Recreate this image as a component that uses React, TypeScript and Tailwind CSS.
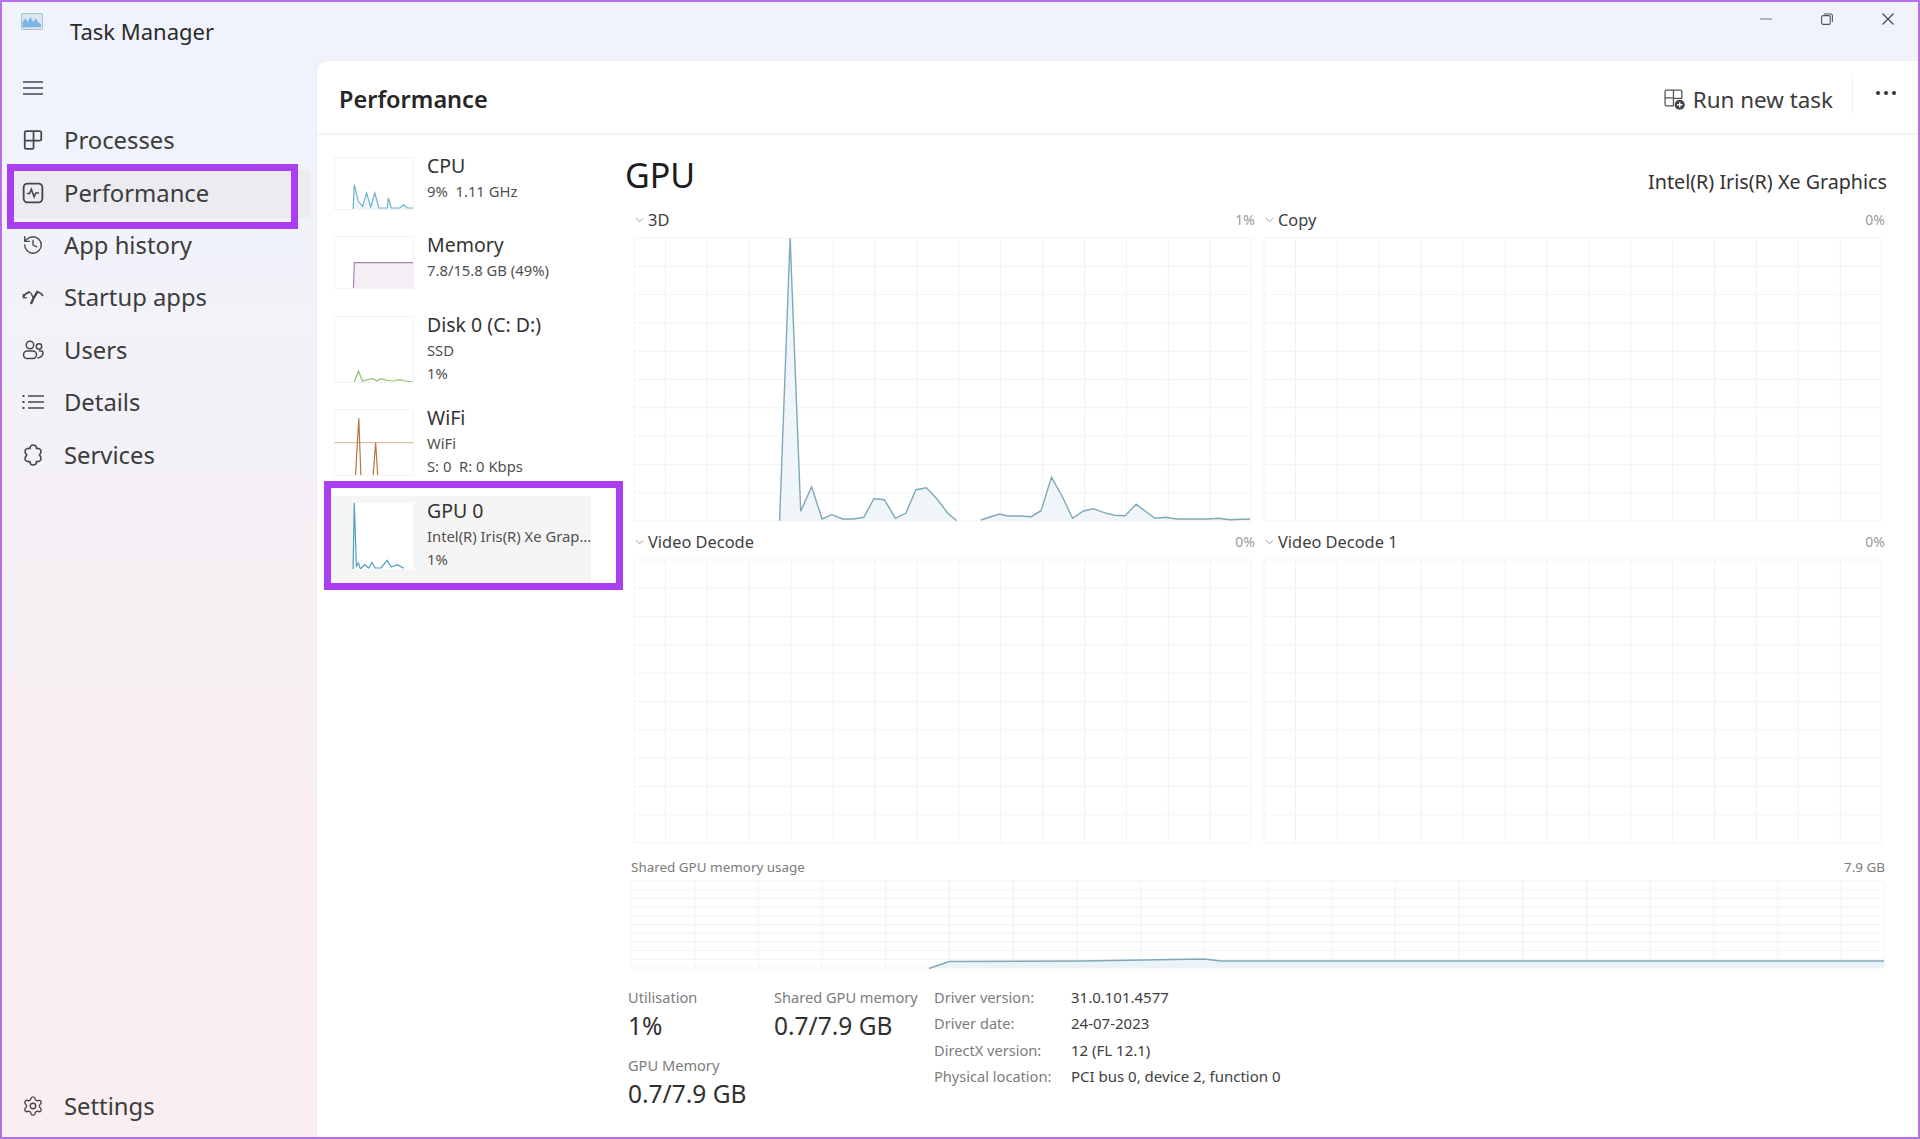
import React from "react";
import { History, Settings } from "lucide-react";

type Line = { vb: string; pts: string; stroke: string; fill?: string; sw?: number };

function Chart({ vb, pts, stroke, fill, sw = 1.2 }: Line) {
  const p = pts.trim().split(" ");
  const base = vb.split(" ").map(Number);
  const bottom = base[1] + base[3];
  const first = p[0].split(",")[0];
  const last = p[p.length - 1].split(",")[0];
  return (
    <>
      {fill && <polygon points={`${first},${bottom} ${pts} ${last},${bottom}`} fill={fill} stroke="none" />}
      <polyline points={pts} fill="none" stroke={stroke} strokeWidth={sw} vectorEffect="non-scaling-stroke" />
    </>
  );
}

function Thumb({ vb, h, lines, bare, children }: { vb: string; h: string; lines: Line[]; bare?: boolean; children?: React.ReactNode }) {
  return (
    <div className={`${h} w-[78px] shrink-0 ${bare ? "" : "bg-white shadow-[0_0_0_1px_#f3f3f3]"}`}>
      <svg viewBox={vb} preserveAspectRatio="none" className="block h-full w-full">
        {children}
        {lines.map((l, i) => (
          <Chart key={i} {...l} />
        ))}
      </svg>
    </div>
  );
}

function Item({ name, subs, selected, thumb, h }: { name: string; subs: string[]; selected?: boolean; thumb: React.ReactNode; h: string }) {
  return (
    <div className={`flex gap-[14px] pl-[8px] pt-[7px] ${h} ${selected ? "bg-[#f5f5f5]" : ""}`}>
      {thumb}
      <div className="-mt-[7px] flex min-w-0 flex-col pt-[1px]">
        <div className="h-[28px] text-[19.5px] leading-[28px] text-[#333]">{name}</div>
        {subs.map((s) => (
          <div key={s} className="h-[22.5px] whitespace-pre text-[14.8px] leading-[22.5px] text-[#505050]">
            {s}
          </div>
        ))}
      </div>
    </div>
  );
}

const W = 617;
const H = 283;

function Grid({ vFirst, vStep, rows, w, h, children }: { vFirst: number; vStep: number; rows: number; w: number; h: number; children?: React.ReactNode }) {
  const vs: number[] = [];
  for (let x = vFirst; x < w; x += vStep) vs.push(x);
  const hs: number[] = [];
  for (let i = 0; i <= rows; i++) hs.push((h * i) / rows);
  return (
    <svg viewBox={`0 0 ${w} ${h}`} className="block h-full w-full overflow-visible">
      {vs.map((x) => (
        <line key={x} x1={x} x2={x} y1={0} y2={h} stroke="#eff1f3" strokeWidth={1} />
      ))}
      {hs.map((y) => (
        <line key={y} x1={0} x2={w} y1={y} y2={y} stroke="#f1f3f4" strokeWidth={1} />
      ))}
      <line x1={0} x2={0} y1={0} y2={h} stroke="#f3f4f5" strokeWidth={1} />
      <line x1={w} x2={w} y1={0} y2={h} stroke="#f3f4f5" strokeWidth={1} />
      {children}
    </svg>
  );
}

const seg1 =
  "382,900 407,52 432,872 458,798 483,895 506,882 532,895 557,895 582,890 606,834 631,837 657,893 682,877 706,807 731,801 756,835 781,877 803,900";
const seg2 =
  "860,898 904,880 925,886 955,886 980,888 1003,870 1028,770 1053,826 1078,893 1104,871 1127,864 1153,876 1178,884 1203,885 1229,851 1274,893 1300,890 1325,895 1400,895 1425,893 1450,897 1500,895";

function toLocal(s: string) {
  return s
    .split(" ")
    .map((p) => {
      const [x, y] = p.split(",").map(Number);
      return `${((x - 36) / 2.376).toFixed(1)},${((y - 52) / 3).toFixed(1)}`;
    })
    .join(" ");
}

function GraphCell({ label, pct, chart }: { label: string; pct: string; chart?: React.ReactNode }) {
  return (
    <div className="flex flex-col">
      <div className="flex h-[35px] items-start justify-between pt-[6px]">
        <div className="flex items-center text-[16.4px] leading-[22px] text-[#404040]">
          <svg viewBox="0 0 10 6" className="ml-[1px] mr-[4px] h-[6px] w-[9px]" fill="none" stroke="#909090" strokeWidth="1">
            <path d="M1 1l4 4 4-4" />
          </svg>
          {label}
        </div>
        <div className="text-[14px] leading-[22px] text-[#9a9a9a]">{pct}</div>
      </div>
      <div className="mr-[4px] h-[283px]">
        <Grid vFirst={31.5} vStep={41.9} rows={10} w={W} h={H}>
          {chart}
        </Grid>
      </div>
    </div>
  );
}

function StatLabel({ children }: { children: React.ReactNode }) {
  return <div className="h-[24px] whitespace-nowrap text-[14.6px] leading-[24px] text-[#7c7c7c]">{children}</div>;
}
function StatValue({ children }: { children: React.ReactNode }) {
  return <div className="h-[34px] whitespace-nowrap text-[24.5px] leading-[34px] text-[#303030]">{children}</div>;
}

function NavRow({ icon, label, selected }: { icon: React.ReactNode; label: string; selected?: boolean }) {
  return (
    <div className="flex h-[52.4px] items-center">
      <div className={`ml-[6px] flex h-[48px] w-[302px] items-center rounded-[5px] ${selected ? "bg-[#ebebf0]" : ""}`}>
        <div className="ml-[14px] flex h-[22px] w-[22px] -translate-y-[1px] items-center justify-center text-[#484848]">{icon}</div>
        <span className="ml-[20px] text-[23.8px] leading-none text-[#3c3c3c]">{label}</span>
      </div>
    </div>
  );
}

const ic = "h-[22px] w-[22px]";

export default function App() {
  const sharedPts = "298,87.5 318,80.5 450,80 573,78 590,80 1253,80";
  return (
    <div
      className="relative flex h-[1139px] w-[1920px] flex-col overflow-hidden border-2 border-[#b66fe8] bg-gradient-to-b from-[#f0f3fb] from-15% to-[#f9eff1] to-70%"
      style={{ fontFamily: '"Noto Sans", "Open Sans", sans-serif' }}
    >
      {/* title bar */}
      <div className="flex h-[59px] shrink-0 items-start">
        <svg viewBox="0 0 22 17" className="ml-[19px] mt-[11px] h-[17px] w-[22px]">
          <rect x="0.5" y="0.5" width="21" height="16" rx="1" fill="#dbe8f3" stroke="#a9bfd2" />
          <path d="M1.500 14.500V9l3-4 2 4 3-5 2.500 5 3-3.500 2 3.500 3 2v3z" fill="#7db4e3" />
        </svg>
        <div className="ml-[27px] mt-[14px] text-[22px] leading-[30px] text-[#2b2b2b]">Task Manager</div>
        <div className="ml-auto mr-[24px] mt-[11px] flex items-center gap-[49px] text-[#666]">
          <svg viewBox="0 0 12 12" className="h-[12px] w-[12px]"><path d="M0 6h12" stroke="#8a8a8a" strokeWidth="1.2" /></svg>
          <svg viewBox="0 0 12 12" className="h-[12px] w-[12px]" fill="none" stroke="#555" strokeWidth="1.1">
            <rect x="0.6" y="2.6" width="8.6" height="8.8" rx="1.5" />
            <path d="M3 1h6.500A1.800 1.800 0 0 1 11.400 3v6" />
          </svg>
          <svg viewBox="0 0 12 12" className="h-[12px] w-[12px]" fill="none" stroke="#444" strokeWidth="1.1"><path d="M0.500 0.500l11 11M11.500 0.500l-11 11" /></svg>
        </div>
      </div>

      <div className="flex min-h-0 flex-1">
        {/* sidebar */}
        <aside className="flex w-[315px] shrink-0 flex-col pb-[4px]">
          <div className="flex h-[54px] items-center pl-[21px]">
            <svg viewBox="0 0 20 14" className="h-[14px] w-[20px]" stroke="#444" strokeWidth="1.300"><path d="M0 1h20M0 7h20M0 13h20" /></svg>
          </div>
          <NavRow label="Processes" icon={
            <svg viewBox="0 0 20 20" className={ic} fill="none" stroke="currentColor" strokeWidth="1.600"><path d="M2.500 3.500a1.500 1.500 0 0 1 1.500-1.500H16a1.500 1.500 0 0 1 1.500 1.500V9a1.500 1.500 0 0 1-1.500 1.500h-5.500V17a1 1 0 0 1-1 1H4a1.500 1.500 0 0 1-1.500-1.500zM2.500 10.500h8M10.500 2v8.500" /></svg>
          } />
          <NavRow selected label="Performance" icon={
            <svg viewBox="0 0 20 20" className={ic} fill="none" stroke="currentColor" strokeWidth="1.700"><rect x="1.500" y="1.500" width="17" height="17" rx="3.500" /><path d="M4.500 10.500H7l1.500-4 2.500 7 1.500-3.500h3" strokeWidth="1.400" /></svg>
          } />
          <NavRow label="App history" icon={<History className={ic} strokeWidth={1.5} />} />
          <NavRow label="Startup apps" icon={
            <svg viewBox="0 0 22 16" className="h-[16px] w-[22px]" fill="none" stroke="currentColor">
              <path d="M1 8.500C2.500 5.500 5 3.500 8 3" strokeWidth="1.800" />
              <path d="M1 5l1 4 3-.5" strokeWidth="1.200" />
              <path d="M16 3c2.200.6 3.800 2 5 4" strokeWidth="1.800" />
              <path d="M16 2L11.500 9 9 15" strokeWidth="2.400" />
              <path d="M8.500 3.500l3 5.500" strokeWidth="1.400" />
            </svg>
          } />
          <NavRow label="Users" icon={
            <svg viewBox="0 0 22 22" className={ic} fill="none" stroke="currentColor" strokeWidth="1.500"><circle cx="8" cy="6" r="3.700" /><circle cx="17" cy="7.500" r="2.700" /><rect x="1.500" y="12" width="13" height="7.500" rx="3.700" /><path d="M17 12h2.500a1.500 1.500 0 0 1 1.500 1.500c0 3-2 5-5.500 5.500" /></svg>
          } />
          <NavRow label="Details" icon={
            <svg viewBox="0 0 22 16" className="h-[16px] w-[22px]" fill="none" stroke="currentColor" strokeWidth="1.500">
              <path d="M6 2h16M6 8h16M6 14h16" />
              <path d="M0.500 2h2M0.500 8h2M0.500 14h2" strokeWidth="2" />
            </svg>
          } />
          <NavRow label="Services" icon={
            <svg viewBox="0 0 22 22" className={ic} fill="none" stroke="currentColor" strokeWidth="1.600" strokeLinejoin="round">
              <path d="M8 4.500C8 2 9.500 1 11 1c2 0 3.500 1.500 3.500 3.500 2-.5 4.500.5 4.500 3 0 1.500-1 2.500-1.500 3.500.8 1 1.500 2 1.500 3.500 0 2.500-2.500 3.500-4.500 3 0 2-1.500 3.500-3.500 3.500-1.500 0-3-1-3-3.500C5.500 18 3 17 3 14.500c0-1.500 1-2.500 1.800-3.500C4 10 3 9 3 7.500 3 5 5.500 4 8 4.500z" />
            </svg>
          } />
          <div className="mt-auto">
            <NavRow label="Settings" icon={<Settings className={ic} strokeWidth={1.5} />} />
          </div>
        </aside>

        {/* main */}
        <main className="flex min-w-0 flex-1 flex-col rounded-tl-[10px] bg-white shadow-[0_0_0_1px_#f0ecf0]">
          <header className="flex h-[74px] shrink-0 items-center border-b-2 border-[#f3f3f3]">
            <h1 className="ml-[22px] translate-y-[3px] text-[23.5px] font-semibold leading-none text-[#262626]">Performance</h1>
            <div className="ml-auto flex translate-y-[3px] items-center">
              <svg viewBox="0 0 20 20" className="mb-[2px] mr-[8px] h-[21px] w-[21px]" fill="none" stroke="#555" strokeWidth="1.200">
                <path d="M1 2.500A1.500 1.500 0 0 1 2.500 1h13A1.500 1.500 0 0 1 17 2.500V9H9v7H2.500A1.500 1.500 0 0 1 1 14.500zM1 8.500h8M9 1v8" />
                <circle cx="15" cy="15" r="4.800" fill="#444" stroke="none" />
                <path d="M15 12.500v5M12.500 15h5" stroke="#fff" strokeWidth="1.300" />
              </svg>
              <span className="text-[22.4px] leading-none text-[#3c3c3c]">Run new task</span>
              <div className="ml-[19px] h-[40px] w-px -translate-y-[6px] bg-[#f0f0f0]" />
              <svg viewBox="0 0 20 4" className="ml-[23px] mr-[22px] h-[4px] w-[20px] -translate-y-[7px]" fill="#333">
                <circle cx="2" cy="2" r="2" /><circle cx="10" cy="2" r="2" /><circle cx="18" cy="2" r="2" />
              </svg>
            </div>
          </header>

          <div className="flex min-h-0 flex-1">
            {/* list */}
            <div className="ml-[10px] mt-[16px] w-[264px] shrink-0">
              <Item
                h="h-[79px]"
                name="CPU"
                subs={["9%  1.11 GHz"]}
                thumb={<Thumb h="h-[51px]" vb="38 85 190 153" lines={[{ vb: "38 85 190 153", stroke: "#6fb2cf", fill: "#eef6fa", pts: "82,238 85,165 95,215 105,230 115,190 125,232 135,190 145,235 165,235 168,205 175,235 195,235 205,225 215,235 228,235" }]} />}
              />
              <Item
                h="h-[80px]"
                name="Memory"
                subs={["7.8/15.8 GB (49%)"]}
                thumb={<Thumb h="h-[51px]" vb="38 322 190 153" lines={[{ vb: "38 322 190 153", stroke: "#a97fb0", fill: "#f3eff5", pts: "83,475 85,399 228,399" }]} />}
              />
              <Item
                h="h-[93px]"
                name="Disk 0 (C: D:)"
                subs={["SSD", "1%"]}
                thumb={<Thumb h="h-[65px]" vb="38 560 190 195" lines={[{ vb: "38 560 190 195", stroke: "#8cc46a", pts: "85,755 95,722 105,752 118,748 130,745 140,752 150,745 165,750 180,752 195,748 210,752 228,755" }]} />}
              />
              <Item
                h="h-[93px]"
                name="WiFi"
                subs={["WiFi", "S: 0  R: 0 Kbps"]}
                thumb={<Thumb h="h-[65px]" vb="38 840 190 195" lines={[
                  { vb: "38 840 190 195", stroke: "#d8bfa8", pts: "38,938 228,938" },
                  { vb: "38 840 190 195", stroke: "#b5763f", pts: "88,1035 96,865 101,1035" },
                  { vb: "38 840 190 195", stroke: "#b5763f", pts: "131,1035 137,938 142,1035" },
                ]} />}
              />
              <Item
                h="h-[93px]"
                selected
                name="GPU 0"
                subs={["Intel(R) Iris(R) Xe Grap...", "1%"]}
                thumb={
                  <Thumb bare h="h-[66px]" vb="38 1120 190 198" lines={[{ vb: "38 1120 190 198", stroke: "#4f9fc2", pts: "82,1318 85,1120 90,1310 95,1300 100,1318 110,1305 120,1315 128,1298 136,1315 150,1315 165,1292 175,1312 190,1305 205,1316" }]}>
                    <rect x="85" y="1120" width="143" height="198" fill="#fff" />
                  </Thumb>
                }
              />
            </div>

            {/* detail */}
            <div className="ml-[34px] flex w-[1262px] shrink-0 flex-col">
              <div className="flex h-[68px] items-start justify-between">
                <div className="mt-[15px] text-[34px] leading-[50px] text-[#1c1c1c]">GPU</div>
                <div className="mt-[32px] text-[19.7px] leading-[30px] text-[#333]">Intel(R) Iris(R) Xe Graphics</div>
              </div>
              <div className="ml-[9px] grid w-[1252px] grid-cols-[621px_621px] gap-x-[9px] gap-y-[4px]">
                <GraphCell
                  label="3D"
                  pct="1%"
                  chart={
                    <>
                      <Chart vb="0 0 617 283" stroke="#7fa9b8" fill="#eff5f9" pts={toLocal(seg1)} sw={1.4} />
                      <Chart vb="0 0 617 283" stroke="#7fa9b8" fill="#eff5f9" pts={toLocal(seg2)} sw={1.4} />
                    </>
                  }
                />
                <GraphCell label="Copy" pct="0%" />
                <GraphCell label="Video Decode" pct="0%" />
                <GraphCell label="Video Decode 1" pct="0%" />
              </div>

              <div className="ml-[6px] mt-[12px] flex h-[26px] w-[1254px] items-center justify-between text-[13.45px] leading-none text-[#7c7c7c]">
                <span>Shared GPU memory usage</span>
                <span>7.9 GB</span>
              </div>
              <div className="ml-[6px] h-[87px] w-[1253px]">
                <Grid vFirst={63.7} vStep={63.7} rows={10} w={1253} h={87}>
                  <Chart vb="0 0 1253 87" stroke="#7fa9b8" fill="#e9f3f8" sw={1.4} pts={sharedPts} />
                </Grid>
              </div>

              <div className="ml-[3px] mt-[17px] flex">
                <div className="w-[146px]">
                  <StatLabel>Utilisation</StatLabel>
                  <StatValue>1%</StatValue>
                  <div className="mt-[10px]">
                    <StatLabel>GPU Memory</StatLabel>
                    <StatValue>0.7/7.9 GB</StatValue>
                  </div>
                </div>
                <div className="w-[160px]">
                  <StatLabel>Shared GPU memory</StatLabel>
                  <StatValue>0.7/7.9 GB</StatValue>
                </div>
                <div className="-mt-[1px] grid grid-cols-[137px_auto] auto-rows-[26.3px] leading-[26.3px]">
                  <span className="text-[14.6px] text-[#7c7c7c]">Driver version:</span><span className="text-[15px] text-[#404040]">31.0.101.4577</span>
                  <span className="text-[14.6px] text-[#7c7c7c]">Driver date:</span><span className="text-[15px] text-[#404040]">24-07-2023</span>
                  <span className="text-[14.6px] text-[#7c7c7c]">DirectX version:</span><span className="text-[15px] text-[#404040]">12 (FL 12.1)</span>
                  <span className="text-[14.6px] text-[#7c7c7c]">Physical location:</span><span className="text-[15px] text-[#404040]">PCI bus 0, device 2, function 0</span>
                </div>
              </div>
            </div>
          </div>
        </main>
      </div>

      {/* annotation boxes drawn over the screenshot */}
      <div className="pointer-events-none absolute left-[5px] top-[162px] h-[65px] w-[291px] border-[7px] border-[#a93ff0]" />
      <div className="pointer-events-none absolute left-[322px] top-[479px] h-[109px] w-[299px] border-[7px] border-[#a93ff0]" />
    </div>
  );
}
